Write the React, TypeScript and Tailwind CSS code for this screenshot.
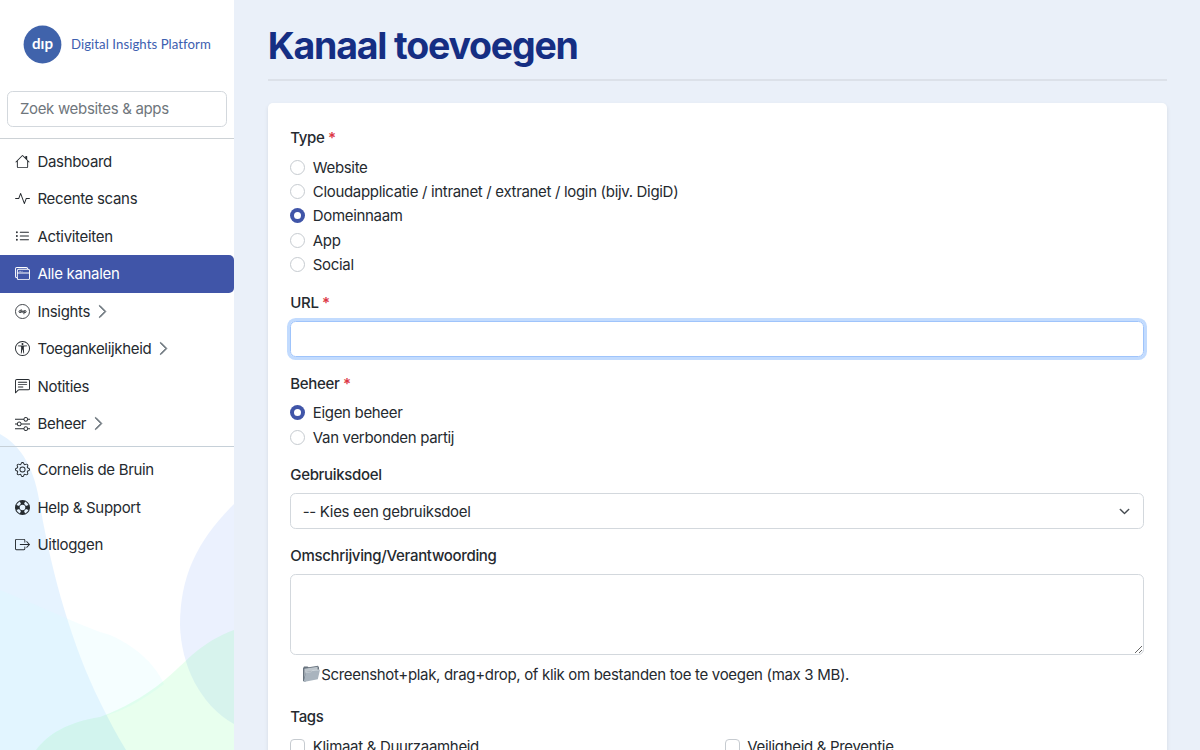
import { ReactNode } from "react";
import {
  BsActivity,
  BsBoxArrowRight,
  BsChatLeftText,
  BsChevronDown,
  BsChevronRight,
  BsGear,
  BsHouse,
  BsLifePreserver,
  BsListUl,
  BsSliders,
  BsUniversalAccessCircle,
  BsWindowStack,
} from "react-icons/bs";

const InsightsIcon = () => (
  <svg width="15" height="15" viewBox="0 0 16 16" fill="none" stroke="currentColor">
    <circle cx="8" cy="8" r="7.5" strokeWidth="0.9" />
    <circle cx="5.4" cy="8.1" r="1.1" strokeWidth="1" />
    <path d="M6.6 5.6v3.7M8.2 6.9v2.4M9.5 6.9v4" strokeWidth="1" />
    <circle cx="10.7" cy="8.1" r="1.1" strokeWidth="1" />
  </svg>
);

type NavItem = {
  label: string;
  icon: ReactNode;
  active?: boolean;
  expandable?: boolean;
};

const mainNav: NavItem[] = [
  { label: "Dashboard", icon: <BsHouse /> },
  { label: "Recente scans", icon: <BsActivity /> },
  { label: "Activiteiten", icon: <BsListUl /> },
  { label: "Alle kanalen", icon: <BsWindowStack />, active: true },
  { label: "Insights", icon: <InsightsIcon />, expandable: true },
  { label: "Toegankelijkheid", icon: <BsUniversalAccessCircle />, expandable: true },
  { label: "Notities", icon: <BsChatLeftText /> },
  { label: "Beheer", icon: <BsSliders />, expandable: true },
];

const userNav: NavItem[] = [
  { label: "Cornelis de Bruin", icon: <BsGear /> },
  { label: "Help & Support", icon: <BsLifePreserver /> },
  { label: "Uitloggen", icon: <BsBoxArrowRight /> },
];

const NavList = ({ items }: { items: NavItem[] }) => (
  <ul>
    {items.map((item) => (
      <li key={item.label}>
        <a
          className={
            item.active
              ? "flex h-[37.5px] items-center rounded-r-[5px] bg-[#4055a8] pl-[15px] text-white"
              : "flex h-[37.5px] items-center pl-[15px]"
          }
        >
          <span className="mr-[7.5px] text-[15px]">{item.icon}</span>
          <span className="pt-[1.6px]">{item.label}</span>
          {item.expandable && (
            <BsChevronRight className="ml-[5px] text-[15px] text-[#6c757d]" strokeWidth={0.9} />
          )}
        </a>
      </li>
    ))}
  </ul>
);

const SidebarWaves = () => (
  <svg
    className="absolute bottom-0 left-0 h-[320px] w-[234px]"
    viewBox="0 430 234 320"
    preserveAspectRatio="none"
  >
    <path d="M0 434C22 446 35 470 40 505C52 575 72 645 100 702C108 718 116 734 126 750H0Z" fill="#3aa5ff" fillOpacity="0.13" />
    <path d="M0 590C50 610 85 628 110 635C140 648 157 668 164 684C140 702 122 712 100 717C70 722 48 736 36 750H0Z" fill="#d8fbff" fillOpacity="0.26" />
    <path d="M234 504C198 540 180 575 180 625C181 665 200 705 234 724Z" fill="#5a8af5" fillOpacity="0.12" />
    <path d="M36 750C48 734 68 722 100 717C150 698 170 675 192 655C206 643 218 636 234 630V750Z" fill="#63ff8d" fillOpacity="0.15" />
  </svg>
);

const Sidebar = () => (
  <aside className="relative h-full w-[234.4px] shrink-0 bg-white">
    <SidebarWaves />
    <div className="relative">
      <div className="flex h-[91px] items-center pb-[2px] pl-[23px]">
        <svg width="39" height="39" viewBox="0 0 39 39">
          <circle cx="19.5" cy="19.5" r="18.9" fill="#4063ab" />
          <text
            x="19.5"
            y="23.6"
            textAnchor="middle"
            textLength="21"
            lengthAdjust="spacingAndGlyphs"
            fill="#fff"
            className="font-['Lato'] text-[15.5px] font-bold tracking-normal"
          >
            dıp
          </text>
        </svg>
        <span className="ml-[9px] font-['Lato',sans-serif] text-[13.2px] tracking-[0.06px] whitespace-nowrap text-[#3d60b0]">
          Digital Insights Platform
        </span>
      </div>
      <div className="px-[7.4px] pb-[11px]">
        <input
          className="h-[35.6px] w-full rounded-[5.6px] border border-[#d3d8dd] bg-white px-[11.5px] placeholder:text-[#6f767c]"
          placeholder="Zoek websites & apps"
        />
      </div>
      <div className="border-t border-[#cdd2d6] pt-[4px] pb-[3.5px]">
        <NavList items={mainNav} />
      </div>
      <div className="border-t border-[#c6d0d8] pt-[4px]">
        <NavList items={userNav} />
      </div>
    </div>
  </aside>
);

const Label = ({ children, required }: { children: ReactNode; required?: boolean }) => (
  <div className="mb-[7.5px] h-[22.5px] leading-[24px] font-medium">
    {children}
    {required && <span className="font-semibold text-[#dc3545]"> *</span>}
  </div>
);

const Radio = ({ label, checked }: { label: string; checked?: boolean }) => (
  <label className="mb-[1.9px] flex h-[22.5px] items-center">
    <span
      className={
        checked
          ? "mr-[7.5px] flex size-[15px] items-center justify-center rounded-full bg-[#4055a8]"
          : "mr-[7.5px] size-[15px] rounded-full border border-[#c6cbd0]"
      }
    >
      {checked && <span className="size-[7px] rounded-full bg-white" />}
    </span>
    <span className="pt-[1.4px]">{label}</span>
  </label>
);

const Checkbox = ({ label }: { label: string }) => (
  <label className="flex h-[22.5px] flex-1 items-center">
    <span className="mr-[7.5px] size-[15px] rounded-[4px] border border-[#c6cbd0]" />
    <span className="pt-[1.4px]">{label}</span>
  </label>
);

const FolderIcon = () => (
  <svg width="19" height="18" viewBox="0 0 19 18" className="shrink-0">
    <path d="M1 3.2L2 1.6H5.5L6.7 2.3L16 .8L17 2.4V6L3 16.8L1 16Z" fill="#68737e" />
    <path d="M2.4 3.8L15.6 1.8V5L4 7L2.4 13Z" fill="#bdc5cc" />
    <path d="M4 7.3L9.3 6.7L10.3 5.6L18 4.8L15.8 14.3L1.6 17Z" fill="#a9b4be" />
    <path d="M4 7.3L9.3 6.7L10.3 5.6L18 4.8" fill="none" stroke="#dce2e7" strokeWidth=".7" />
  </svg>
);

const types = [
  "Website",
  "Cloudapplicatie / intranet / extranet / login (bijv. DigiD)",
  "Domeinnaam",
  "App",
  "Social",
];

const ChannelForm = () => (
  <form className="h-[700px] rounded-[5px] bg-white px-[22.6px] pt-[23px] shadow-[0_2px_4px_rgba(0,0,0,0.09)]">
    <div className="mb-[15px]">
      <Label required>Type</Label>
      {types.map((type) => (
        <Radio key={type} label={type} checked={type === "Domeinnaam"} />
      ))}
    </div>

    <div className="mb-[15px]">
      <Label required>URL</Label>
      <div className="h-[35.6px] rounded-[5.6px] border border-[#9fc4fb] ring-[3px] ring-[#c2dbfe]" />
    </div>

    <div className="mb-[15px]">
      <Label required>Beheer</Label>
      <Radio label="Eigen beheer" checked />
      <Radio label="Van verbonden partij" />
    </div>

    <div className="mb-[15px]">
      <Label>Gebruiksdoel</Label>
      <div className="flex h-[35.6px] items-center justify-between rounded-[5.6px] border border-[#d3d8dd] px-[11.5px]">
        <span className="pt-[1.4px]">-- Kies een gebruiksdoel</span>
        <BsChevronDown className="mr-[1.5px] text-[11px] text-[#343a40]" strokeWidth={1.2} />
      </div>
    </div>

    <div>
      <Label>Omschrijving/Verantwoording</Label>
      <textarea className="block h-[80.6px] w-full resize-y rounded-[5.6px] border border-[#d3d8dd]" />
      <div className="mt-[8.5px] mb-[19.5px] flex h-[22.5px] items-center pl-[11.9px] whitespace-nowrap">
        <FolderIcon />
        <span className="pt-[1.4px]">
          Screenshot+plak, drag+drop, of klik om bestanden toe te voegen (max 3 MB).
        </span>
      </div>
    </div>

    <Label>Tags</Label>
    <div className="flex gap-[15px]">
      <Checkbox label="Klimaat & Duurzaamheid" />
      <Checkbox label="Veiligheid & Preventie" />
    </div>
  </form>
);

const App = () => {
  return (
    <div className="flex h-[750px] w-[1200px] overflow-hidden bg-[#eaf0f9] font-['Inter',sans-serif] text-[15px] leading-[22.5px] tracking-[-0.32px] text-[#252a2f]">
      <Sidebar />
      <main className="flex-1 pr-[33.3px] pl-[33.3px]">
        <div className="mb-[22.4px] border-b-2 border-[#dce1e9] pt-[24px] pb-[10.5px]">
          <h1 className="text-[37.5px] leading-[44px] font-bold tracking-[-1.2px] text-[#152e83]">
            Kanaal toevoegen
          </h1>
        </div>
        <ChannelForm />
      </main>
    </div>
  );
};

export default App;
